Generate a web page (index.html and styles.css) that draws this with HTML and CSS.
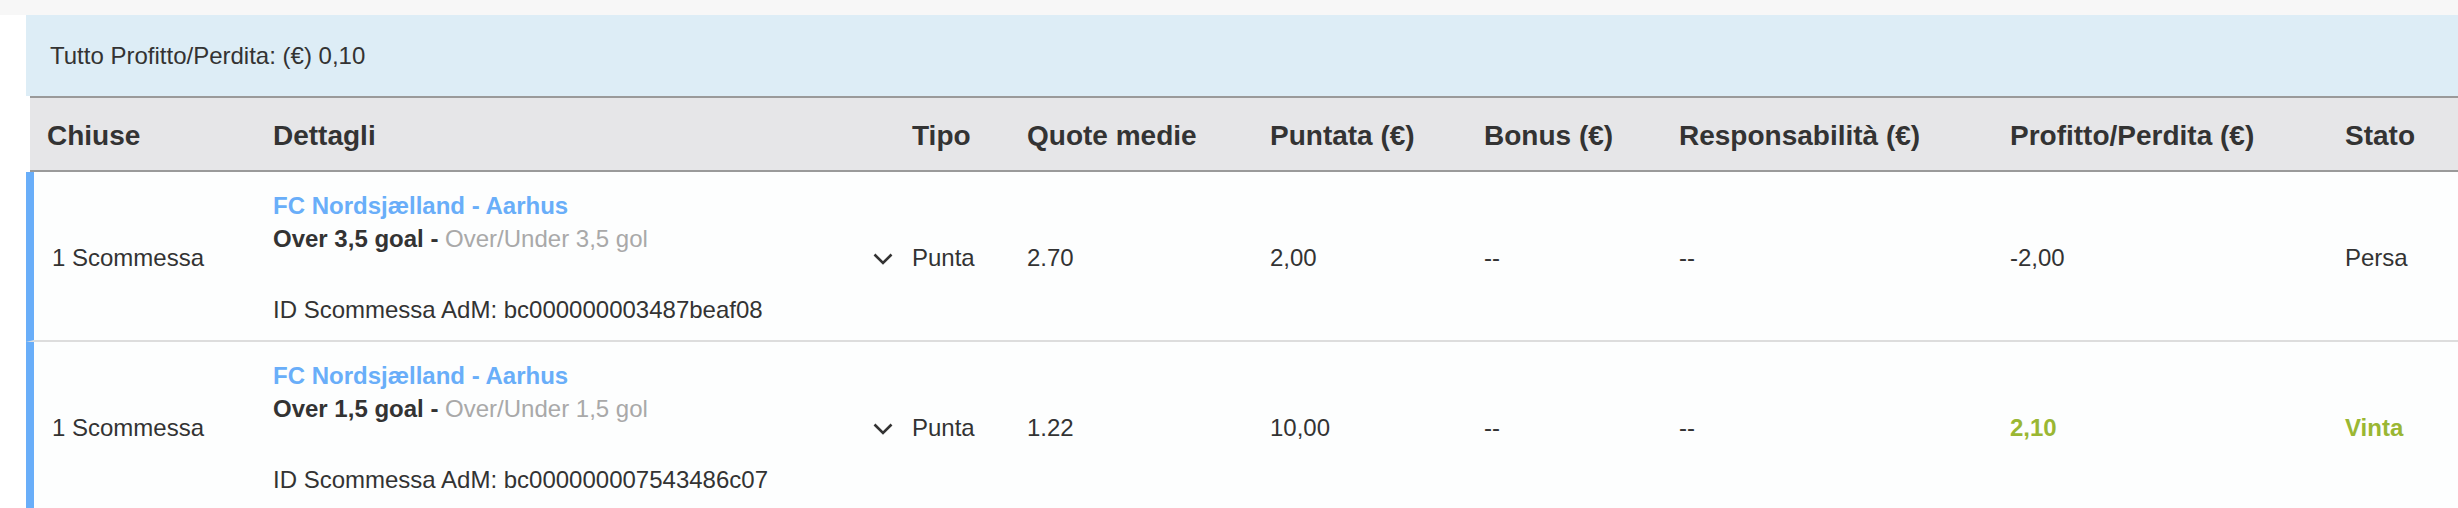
FILE: index.html
```html
<!DOCTYPE html>
<html lang="it">
<head>
<meta charset="utf-8">
<title>Scommesse chiuse</title>
<link rel="stylesheet" href="styles.css">
</head>
<body>
<div class="topbar"></div>
<div class="panel">
  <div class="summary">Tutto Profitto/Perdita: (€) 0,10</div>
  <div class="table">
    <div class="thead grid">
      <div class="cell first">Chiuse</div>
      <div class="cell">Dettagli</div>
      <div class="cell chev"></div>
      <div class="cell">Tipo</div>
      <div class="cell">Quote medie</div>
      <div class="cell">Puntata (€)</div>
      <div class="cell">Bonus (€)</div>
      <div class="cell">Responsabilità (€)</div>
      <div class="cell">Profitto/Perdita (€)</div>
      <div class="cell">Stato</div>
    </div>

    <div class="trow grid">
      <div class="cell first">1 Scommessa</div>
      <div class="cell details">
        <div class="event">FC Nordsjælland - Aarhus</div>
        <div class="market"><b>Over 3,5 goal -</b> <span class="muted">Over/Under 3,5 gol</span></div>
        <div class="spacer"></div>
        <div class="betid">ID Scommessa AdM: bc000000003487beaf08</div>
      </div>
      <div class="cell chev"><svg class="chevron" viewBox="0 0 20 12" width="20" height="12"><polyline points="1.5,1.5 10,10 18.5,1.5" fill="none" stroke="#333" stroke-width="2.6"/></svg></div>
      <div class="cell">Punta</div>
      <div class="cell">2.70</div>
      <div class="cell">2,00</div>
      <div class="cell">--</div>
      <div class="cell">--</div>
      <div class="cell">-2,00</div>
      <div class="cell">Persa</div>
    </div>

    <div class="trow grid">
      <div class="cell first">1 Scommessa</div>
      <div class="cell details">
        <div class="event">FC Nordsjælland - Aarhus</div>
        <div class="market"><b>Over 1,5 goal -</b> <span class="muted">Over/Under 1,5 gol</span></div>
        <div class="spacer"></div>
        <div class="betid">ID Scommessa AdM: bc000000007543486c07</div>
      </div>
      <div class="cell chev"><svg class="chevron" viewBox="0 0 20 12" width="20" height="12"><polyline points="1.5,1.5 10,10 18.5,1.5" fill="none" stroke="#333" stroke-width="2.6"/></svg></div>
      <div class="cell">Punta</div>
      <div class="cell">1.22</div>
      <div class="cell">10,00</div>
      <div class="cell">--</div>
      <div class="cell">--</div>
      <div class="cell win">2,10</div>
      <div class="cell win">Vinta</div>
    </div>
  </div>
</div>
</body>
</html>
```

FILE: styles.css
```css
html, body {
  margin: 0;
  padding: 0;
  background: #ffffff;
}

body {
  font-family: "Liberation Sans", Arial, Helvetica, sans-serif;
  font-size: 24px;
  color: #333333;
}

.topbar {
  height: 15px;
  background: #f7f7f7;
}

.panel {
  margin-left: 26px;
}

.summary {
  height: 81px;
  display: flex;
  align-items: center;
  padding-left: 24px;
  background: #ddedf6;
}

.grid {
  display: grid;
  grid-template-columns: var(--first) 604px 35px 115px 243px 214px 195px 331px 335px 1fr;
}

.thead {
  --first: 226px;
  margin-left: 4px;
  height: 72px;
  background: #e6e6e8;
  border-top: 2px solid #9a9a9a;
  border-bottom: 2px solid #9a9a9a;
  font-size: 28px;
  font-weight: bold;
  color: #333333;
}

.trow {
  --first: 222px;
  min-height: 168px;
  border-left: 8px solid #69aef9;
  border-bottom: 2px solid #dddddd;
  background: #fdfefe;
}

.cell {
  display: flex;
  align-items: center;
  padding-left: 17px;
  padding-top: 3px;
  white-space: nowrap;
}

.trow .cell.first {
  padding-left: 18px;
}

.cell.chev {
  padding-left: 13px;
}

.chevron {
  display: block;
  margin-top: 2px;
}

.details {
  flex-direction: column;
  align-items: flex-start;
  justify-content: flex-start;
  padding-top: 17px;
  padding-bottom: 14px;
  line-height: 33px;
}

.event {
  color: #69aef9;
  font-weight: bold;
}

.market b {
  font-weight: bold;
  color: #333333;
}

.muted {
  color: #a9a9a9;
}

.spacer {
  height: 38px;
}

.win {
  color: #9ab733;
  font-weight: bold;
}
```
